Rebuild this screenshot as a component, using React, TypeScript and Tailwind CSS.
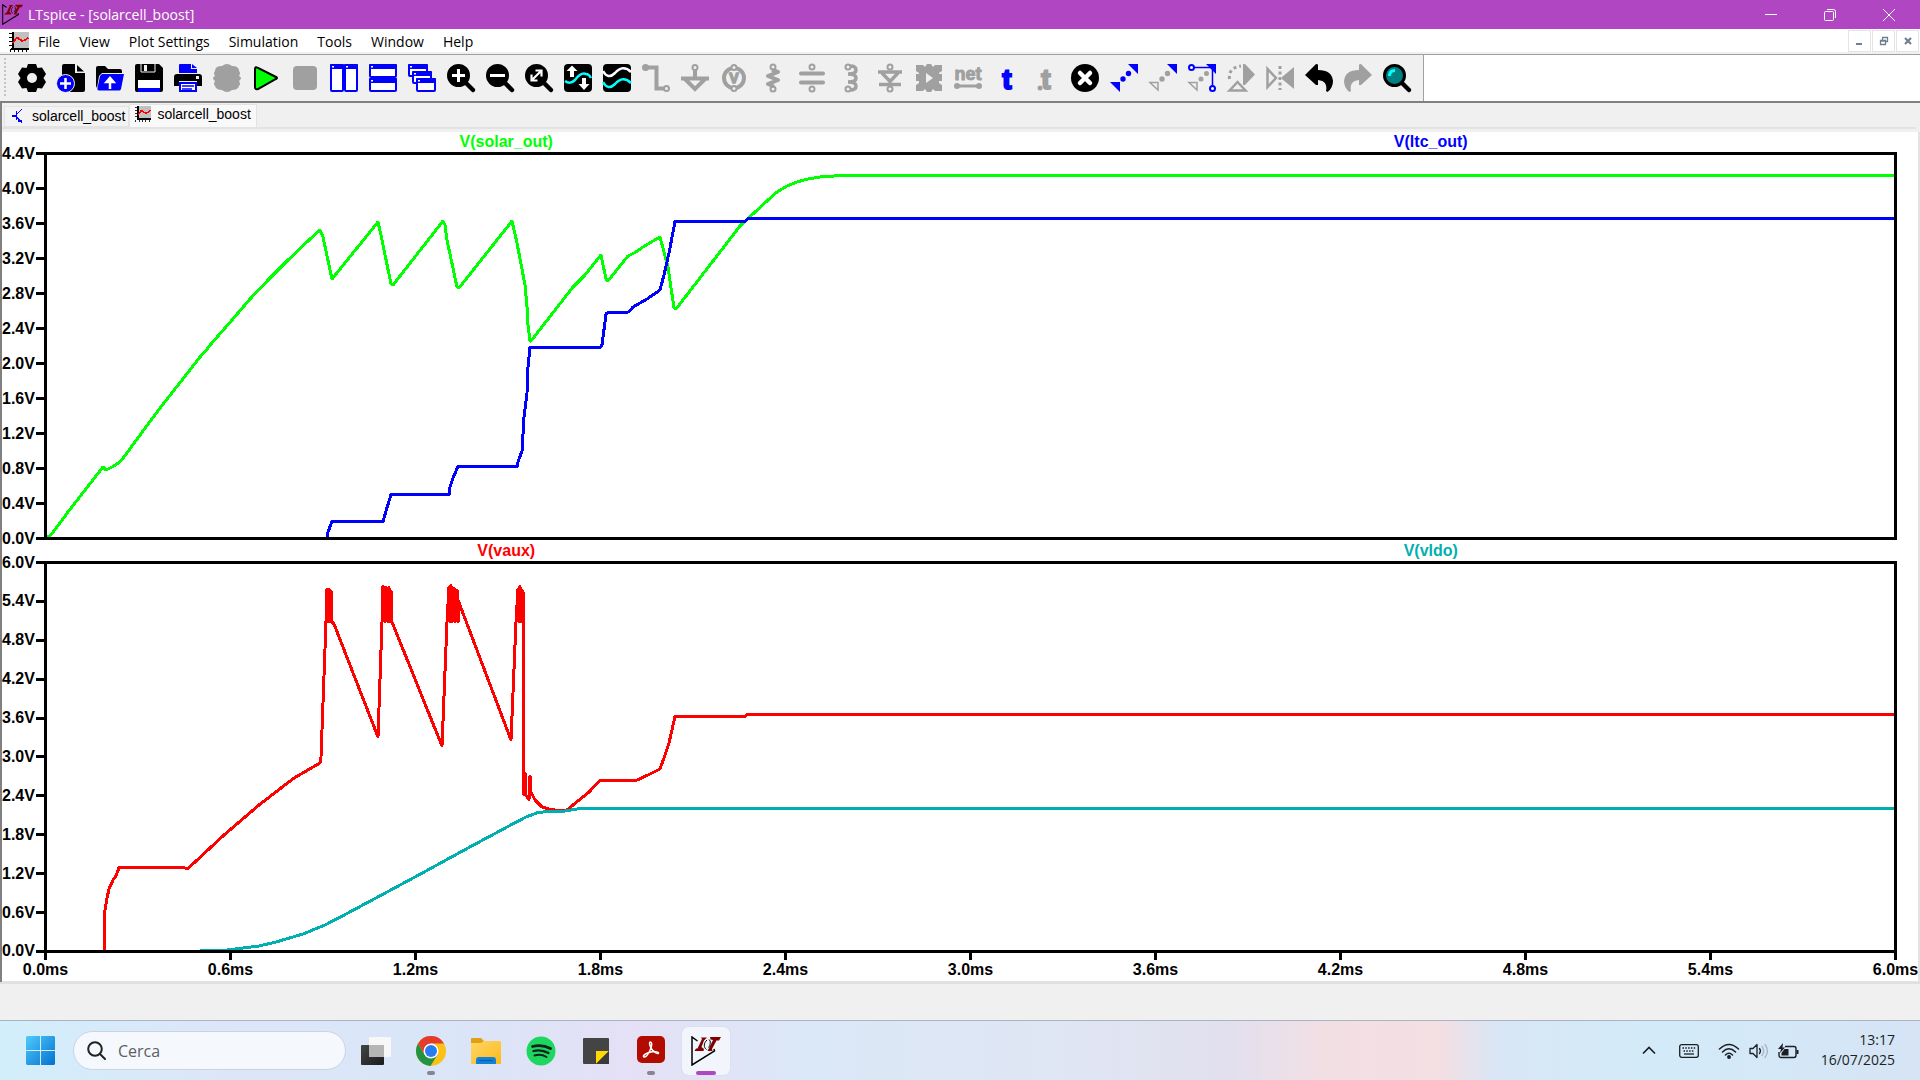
import type { ReactNode } from "react";

type Tool = { label: string; icon: ReactNode; disabled?: boolean };

const G = "#a0a0a0";
const B = "#0000ff";

function LtLogo({ size, outline = "#000000" }: { size: number; outline?: string }) {
  return (
    <svg width={size} height={size} viewBox="0 0 30 30" aria-hidden="true">
      <path d="M6.500 5 L1 1 L1 29 L23.500 15 L23 13" fill="none" stroke={outline} strokeWidth="1.500" />
      <path
        d="M10 1.500 H16 L13 4.500 L10.500 11 L13 13 L12.500 15 H3.500 L5 12.500 H6.500 L11 3 Z M19 1 H30 L28 4.500 H25.500 L21 13 L21.500 15 H16.500 L22 4 L19.500 3.500 Z"
        fill="#7f0000"
      />
      <path d="M16 4 C12.500 7 12.500 11.500 15.500 13.500 M18 3.500 C20 5 19.500 9 17.500 11.500" fill="none" stroke={outline} strokeWidth="1" />
    </svg>
  );
}

function PlotIcon({ size }: { size: number }) {
  return (
    <svg width={size} height={size} viewBox="0 0 20 20" shapeRendering="crispEdges" aria-hidden="true">
      <rect x="3" y="0" width="17" height="16" fill="#c0c0c0" />
      <path d="M3.500 0 V17 M2 16.500 H20" stroke="#000" strokeWidth="2" />
      <path d="M0 1.500 H3 M0 5.500 H3 M0 9.500 H3 M0 13.500 H3 M1 19.500 V17 M5.500 20 V17 M9.500 20 V17 M13.500 20 V17 M17.500 20 V17" stroke="#000" />
      <path d="M4 11 L7 6.500 L9 6 L13 9 L16 8 L19.500 5.500" fill="none" stroke="#f00" strokeWidth="1.800" />
    </svg>
  );
}

function Lens({ children, fill = "#000" }: { children: ReactNode; fill?: string }) {
  return (
    <>
      <path d="M18 18 L26 26" stroke="#000" strokeWidth="4.500" strokeLinecap="round" />
      <circle cx="11.500" cy="11.500" r="10" fill={fill} stroke="#000" strokeWidth="3" />
      {children}
    </>
  );
}

const MINI = (x: number, y: number, w: number, h: number) => (
  <g key={`${x}-${y}`}>
    <rect x={x + 1} y={y + 1} width={w - 2} height={h - 2} rx="1" fill="#fff" stroke={B} strokeWidth="2" />
    <rect x={x} y={y} width={w} height="5" rx="1" fill={B} />
    <rect x={x + 2} y={y + 2} width="2" height="1.500" fill="#fff" />
  </g>
);

const tools: Tool[] = [
  {
    label: "Settings",
    icon: (
      <>
        <path
          d="M10 0 H18 L19.500 4 L24 3.500 L28 10 L25.500 14 L28 18 L24 24.500 L19.500 24 L18 28 H10 L8.500 24 L4 24.500 L0 18 L2.500 14 L0 10 L4 3.500 L8.500 4 Z"
          strokeLinejoin="round"
        />
        <circle cx="14" cy="14" r="5" fill="#f0f0f0" />
      </>
    ),
  },
  {
    label: "New",
    icon: (
      <>
        <path d="M7 0 H18 V9 H28 V26 Q28 28 26 28 H7 Q5 28 5 26 V2 Q5 0 7 0 Z M20 1 L27 7.500 H20 Z" />
        <circle cx="8.500" cy="19.500" r="9" fill={B} stroke="#f0f0f0" strokeWidth="1" />
        <path d="M8.500 14 V25 M3 19.500 H14" stroke="#fff" strokeWidth="2.500" />
      </>
    ),
  },
  {
    label: "Open",
    icon: (
      <>
        <path d="M0 22 V4 Q0 2 2 2 H9 L12 5 H24 Q26 5 26 7 V9 H6 L3 12 L1 24 Z" />
        <path d="M6 10 H28 L25 25 Q24.500 26.500 23 26.500 H3 Q1 26.500 1.500 24 L4 12 Z" fill={B} />
        <path d="M14 25 V17 M10.500 18 L14 14 L17.500 18 Z" fill="#fff" stroke="#fff" strokeWidth="2.500" />
      </>
    ),
  },
  {
    label: "Save",
    icon: (
      <>
        <path d="M2 0 H24 L28 4 V26 Q28 28 26 28 H2 Q0 28 0 26 V2 Q0 0 2 0 Z" />
        <path d="M6 0 V8 H20 V0" fill="none" stroke="#f0f0f0" strokeWidth="1" />
        <rect x="9" y="1" width="3" height="6" fill="#f0f0f0" />
        <rect x="3" y="16" width="22" height="9" fill="#fff" />
        <rect x="3" y="24" width="22" height="4" fill={B} />
      </>
    ),
  },
  {
    label: "Print",
    icon: (
      <>
        <path d="M5 9 V1 Q5 0 6 0 H17 V5 H23 V9 Z M18 0 L23 4 H18 Z" fill={B} />
        <path d="M3 10 H25 Q28 10 28 13 V22 H23 V17 H5 V22 H0 V13 Q0 10 3 10 Z" />
        <rect x="22" y="12" width="3" height="3" fill="#f0f0f0" />
        <rect x="6" y="19" width="16" height="8" fill="#fff" stroke={B} strokeWidth="2" />
        <path d="M8 22 H20 M8 25 H18" stroke={B} strokeWidth="1.500" />
      </>
    ),
  },
  {
    label: "Component options",
    disabled: true,
    icon: <path d="M9 2 Q14 -2 19 2 Q26 2 26 7 Q28 9 26 12 Q30 14 26 17 Q28 20 26 22 Q25 26 19 26 Q14 30 9 26 Q3 26 2 22 Q0 20 2 17 Q-2 14 2 12 Q0 9 2 7 Q2 2 9 2 Z" fill={G} />,
  },
  {
    label: "Run",
    icon: <path d="M3 5 Q3 2 6 4 L24 13 Q26 14 24 15 L6 25 Q3 26 3 23 Z" fill="#0f0" stroke="#000" strokeWidth="2" />,
  },
  { label: "Stop", disabled: true, icon: <rect x="2" y="2" width="24" height="24" rx="4" fill={G} /> },
  { label: "Tile vertically", icon: [MINI(0, 0, 14, 28), MINI(14, 0, 14, 28)] },
  { label: "Tile horizontally", icon: [MINI(0, 0, 28, 14), MINI(0, 14, 28, 14)] },
  { label: "Cascade", icon: [MINI(0, 0, 20, 13), MINI(4, 7, 20, 13), MINI(8, 14, 20, 14)] },
  {
    label: "Zoom in",
    icon: (
      <Lens>
        <path d="M11.500 5 V18 M5 11.500 H18" stroke="#fff" strokeWidth="3" />
      </Lens>
    ),
  },
  {
    label: "Zoom out",
    icon: (
      <Lens>
        <path d="M4 11.500 H19" stroke="#fff" strokeWidth="3" />
      </Lens>
    ),
  },
  {
    label: "Zoom to fit",
    icon: (
      <Lens>
        <path d="M7 16 L16 7 M10.500 6.500 H16.500 V12.500 M6.500 10.500 V16.500 H12.500" fill="none" stroke="#fff" strokeWidth="2.200" />
      </Lens>
    ),
  },
  {
    label: "Autorange",
    icon: (
      <>
        <rect width="28" height="28" rx="4" />
        <path d="M1 17 Q6 21 11 16 Q17 8 22 10 Q25 10 27 14" fill="none" stroke="#0ff" strokeWidth="2.500" />
        <path d="M6 13 V7 H2.500 L8 1.500 L13.500 7 H10 V13 Z M18 14 V20 H14.500 L20 26 L25.500 20 H22 V14 Z" fill="#fff" />
      </>
    ),
  },
  {
    label: "Add traces",
    icon: (
      <>
        <rect width="28" height="28" rx="4" />
        <path d="M0 7 Q5 16 12 9 Q20 0 28 8" fill="none" stroke="#fff" strokeWidth="2.500" />
        <path d="M0 18 Q5 27 12 20 Q20 11 28 19" fill="none" stroke="#0ff" strokeWidth="2.500" />
      </>
    ),
  },
  {
    label: "Wire",
    disabled: true,
    icon: (
      <g fill="none" stroke={G} strokeWidth="4">
        <path d="M4 3.500 H14.500 V24.500 H22" />
        <circle cx="3.500" cy="3.500" r="1.500" fill={G} />
        <circle cx="24.500" cy="24.500" r="2.500" strokeWidth="2" />
      </g>
    ),
  },
  {
    label: "Ground",
    disabled: true,
    icon: (
      <g fill="none" stroke={G} strokeWidth="4">
        <circle cx="14" cy="3.500" r="2.500" strokeWidth="2" />
        <path d="M14 6 V14 M0 14.500 H28 M4 15 L14 25 L24 15" />
      </g>
    ),
  },
  {
    label: "Voltage source",
    disabled: true,
    icon: (
      <>
        <circle cx="14" cy="14" r="10" fill="none" stroke={G} strokeWidth="4" />
        <circle cx="14" cy="3.500" r="2.500" fill="#f0f0f0" stroke={G} strokeWidth="2" />
        <circle cx="14" cy="24.500" r="2.500" fill="#f0f0f0" stroke={G} strokeWidth="2" />
        <text x="14" y="19" textAnchor="middle" fontFamily="Liberation Sans, sans-serif" fontWeight="bold" fontSize="14" fill={G} stroke={G} strokeWidth="1.500">V</text>
      </>
    ),
  },
  {
    label: "Resistor",
    disabled: true,
    icon: (
      <g fill="none" stroke={G} strokeWidth="3" strokeLinejoin="round">
        <circle cx="14" cy="3" r="2.500" strokeWidth="2" />
        <circle cx="14" cy="25" r="2.500" strokeWidth="2" />
        <path d="M13 6 L19 8 L9 12 L19 16 L9 20 L15 22.500" strokeWidth="4" />
      </g>
    ),
  },
  {
    label: "Capacitor",
    disabled: true,
    icon: (
      <g fill="none" stroke={G} strokeWidth="4" strokeLinecap="round">
        <circle cx="14" cy="3" r="2.500" strokeWidth="2" />
        <circle cx="14" cy="25" r="2.500" strokeWidth="2" />
        <path d="M3 9.500 H25 M3 18.500 H25" />
      </g>
    ),
  },
  {
    label: "Inductor",
    disabled: true,
    icon: (
      <g fill="none" stroke={G} strokeWidth="3.500">
        <circle cx="11" cy="3" r="2.500" strokeWidth="2" />
        <circle cx="11" cy="25" r="2.500" strokeWidth="2" />
        <path d="M13 2 Q19 2 19 6 Q19 10 11 10 Q19 10 19 14 Q19 18 11 18 Q19 18 19 22 Q19 26 13 26" />
      </g>
    ),
  },
  {
    label: "Diode",
    disabled: true,
    icon: (
      <g fill="none" stroke={G} strokeWidth="3.500">
        <circle cx="14" cy="3" r="2.500" strokeWidth="2" />
        <circle cx="14" cy="25" r="2.500" strokeWidth="2" />
        <path d="M2 8 H26 M6 9 L14 17.500 L22 9 M3 20.500 H25" />
      </g>
    ),
  },
  {
    label: "Component",
    disabled: true,
    icon: (
      <>
        <path d="M1 1 H8 L10 3 L12 0 H16 L18 3 L20 1 H27 V7 L24 9 V10 H27 V17 H24 V19 L27 21 V27 H20 L18 25 L16 28 H12 L10 25 L8 27 H1 V21 L4 19 V17 H1 V10 H4 V9 L1 7 Z" fill={G} />
        <path d="M11 9 L18 14 L11 19 Z" fill="#f0f0f0" />
      </>
    ),
  },
  {
    label: "Net name",
    disabled: true,
    icon: (
      <>
        <text x="14" y="16" textAnchor="middle" fontFamily="Liberation Sans, sans-serif" fontWeight="bold" fontSize="18" fill={G} stroke={G}>net</text>
        <path d="M3 22 H25" stroke={G} strokeWidth="3" />
        <circle cx="3" cy="22" r="3" fill={G} />
        <circle cx="25" cy="22" r="3" fill={G} />
      </>
    ),
  },
  {
    label: "Text",
    icon: (
      <text x="14" y="25" textAnchor="middle" fontFamily="Liberation Sans, sans-serif" fontWeight="bold" fontSize="28" fill={B} stroke={B} strokeWidth="2">t</text>
    ),
  },
  {
    label: "SPICE directive",
    disabled: true,
    icon: (
      <>
        <text x="14" y="25" textAnchor="middle" fontFamily="Liberation Sans, sans-serif" fontWeight="bold" fontSize="28" fill={G} stroke={G} strokeWidth="2">t</text>
        <circle cx="8" cy="24" r="2.500" fill={G} />
      </>
    ),
  },
  {
    label: "Delete",
    icon: (
      <>
        <circle cx="14" cy="14" r="14" />
        <path d="M9 9 L19 19 M19 9 L9 19" stroke="#fff" strokeWidth="4.500" strokeLinecap="round" />
      </>
    ),
  },
  {
    label: "Move",
    icon: (
      <g fill={B}>
        <path d="M18 0 H28 V10 Z M0 18 H10 V28 Z" />
        <circle cx="13" cy="15" r="2.700" />
        <circle cx="18.500" cy="9.500" r="2.700" />
      </g>
    ),
  },
  {
    label: "Copy",
    disabled: true,
    icon: (
      <>
        <path d="M18 0 H28 V10 Z" fill={B} />
        <path d="M1 18.500 H9 V26 Z" fill="none" stroke={G} strokeWidth="1.500" />
        <circle cx="13" cy="15" r="2.700" fill={G} />
        <circle cx="18.500" cy="9.500" r="2.700" fill={G} />
      </>
    ),
  },
  {
    label: "Drag",
    icon: (
      <>
        <path d="M18 0 H28 V10 Z" fill={B} />
        <path d="M4 3.500 H25" stroke={B} strokeWidth="1.500" />
        <path d="M24.500 4 V23" stroke={B} strokeWidth="1.500" />
        <circle cx="3.500" cy="3.500" r="2.500" fill="#fff" stroke={B} strokeWidth="2" />
        <circle cx="24.500" cy="24.500" r="2.500" fill="#fff" stroke={B} strokeWidth="2" />
        <path d="M1 18.500 H9 V26 Z" fill="none" stroke={G} strokeWidth="1.500" />
        <circle cx="13" cy="15" r="2.500" fill={G} />
        <circle cx="18.500" cy="9.500" r="2.500" fill={G} />
      </>
    ),
  },
  {
    label: "Rotate",
    disabled: true,
    icon: (
      <>
        <path d="M16 0 H18 L28 10.500 L18 21 H16 Z" fill={G} />
        <path d="M2.500 26.500 L10.500 18 L18.500 26.500 Z" fill="none" stroke={G} strokeWidth="2.500" />
        <path d="M2.500 15 Q1 4 14 2" fill="none" stroke={G} strokeWidth="3" strokeDasharray="3 3" />
      </>
    ),
  },
  {
    label: "Mirror",
    disabled: true,
    icon: (
      <>
        <path d="M28 3 V25 L16 15 V13 Z" fill={G} />
        <path d="M1.500 5 V23 L10 14 Z" fill="none" stroke={G} strokeWidth="2.500" />
        <path d="M14 2 V26" stroke={G} strokeWidth="3" strokeDasharray="3 2.500" />
      </>
    ),
  },
  { label: "Undo", icon: <path d="M0 11 L11 0 L13 0.500 V6 Q27 6 28 17 Q28 24 22.500 28 L21 27 Q23 17 13 16 V21 L11 21 Z" /> },
  {
    label: "Redo",
    disabled: true,
    icon: <path d="M28 11 L17 0 L15 0.500 V6 Q1 6 0 17 Q0 24 5.500 28 L7 27 Q5 17 15 16 V21 L17 21 Z" fill={G} />,
  },
  {
    label: "Find",
    icon: (
      <Lens fill="#008080">
        <path d="M6.500 12 Q6.500 6.500 12 6.500" fill="none" stroke="#0ff" strokeWidth="3" />
      </Lens>
    ),
  },
];

type Trace = { name: string; text: string; stroke: string; points: string };

const solar: Trace = {
  name: "V(solar_out)",
  text: "text-[#00ff00]",
  stroke: "#00ff00",
  points:
    "47,537 51,535 57,527 68,512 103,467 106,470 114,466 121,461 143,431 164,403 186,375 200,357 208,348 211,344 232,320 250,299 270,278 273,275 286,262 309,240 320,230 323,237 332,279 378,222 381,235 391,284 393,285 443,221 445,225 447,240 457,287 459,288 512,221 517,243 525,285 527,307 528,325 530,341 531,341 573,287 585,275 601,255 606,279 608,281 628,256 636,252 643,247 653,241 660,237 668,267 674,308 676,309 740,226 768,200 777,192 787,186 797,182 808,179 820,177 834,176 845,175.500 1896,175.500",
};
const ltc: Trace = {
  name: "V(ltc_out)",
  text: "text-[#0000ff]",
  stroke: "#0000ff",
  points:
    "327,538 328,532 332,521.500 383,521.500 386,511 391,494.500 449,494.500 450,487 453,478 458,466.500 517,466.500 518,462 522,451 524,417 527,393 528,367 530,347.500 600,347.500 602,345 606,314 608,312.500 627,312.500 630,311 633,307 647,299 660,290 664,275 669,253 675,221.500 745,221.500 748,218.500 1896,218.500",
};
const vaux: Trace = {
  name: "V(vaux)",
  text: "text-[#ff0000]",
  stroke: "#ff0000",
  points:
    "104,951 105,910 107,898 109,889 113,880 116,876 119,867.500 182,867.500 188,868.500 210,848 224,835 259,805 294,778 320,763 321,757 323,703 326,622 327,589 328,622 329,589 330,622 331,591 332,622 334,624 378,737 382,622 383,586 385,622 386,587 388,622 389,587 390,622 391,591 392,622 442,746 447,622 449,587 450,622 451,585 452,622 454,588 455,622 457,590 458,622 458,600 511,740 516,622 518,589 519,622 520,586 521,622 522,590 523,592 524,795 525,773 526,795 529,800 530,776 531,792 535,800 542,807 549,809 555,810 567,810 573,805 589,792 600,780.500 636,780.500 648,775 656,771 660,769 664,758 669,743 675,716.500 745,716.500 747,714.500 1896,714.500",
};
const vldo: Trace = {
  name: "V(vldo)",
  text: "text-[#00b0b0]",
  stroke: "#00b0b0",
  points:
    "200,950.500 227,950 243,948 259,946 276,942 303,934 325,925 348,913 415,877 468,848 509,826 526,817 538,812.500 549,811.500 562,811.500 580,808.500 1896,808.500",
};

function Pane({ traces, ticks, viewBox, grow, header }: { traces: Trace[]; ticks: string[]; viewBox: string; grow: string; header: string }) {
  return (
    <section className={`flex min-h-0 flex-col ${grow}`}>
      <div className={`ml-[42px] mr-[27px] grid shrink-0 grid-cols-2 text-center ${header}`}>
        {traces.map((t) => (
          <span key={t.name} className={t.text}>{t.name}</span>
        ))}
      </div>
      <div className="mr-[23px] flex min-h-0 flex-1">
        <div className="flex w-[42px] shrink-0 flex-col justify-between">
          {ticks.map((t) => (
            <div key={t} className="flex h-[3px] items-center justify-between">
              <span className="leading-4">{t}</span>
              <span className="h-[3px] w-2 bg-black" />
            </div>
          ))}
        </div>
        <div className="min-w-0 flex-1 border-[3px] border-black">
          <svg className="block h-full w-full" viewBox={viewBox} preserveAspectRatio="none" role="img" aria-label={traces.map((t) => t.name).join(", ")}>
            {traces.map((t) => (
              <polyline key={t.name} points={t.points} fill="none" stroke={t.stroke} strokeWidth="3" vectorEffect="non-scaling-stroke" shapeRendering="crispEdges" strokeLinejoin="round" />
            ))}
          </svg>
        </div>
      </div>
    </section>
  );
}

const upperTicks = ["4.4V", "4.0V", "3.6V", "3.2V", "2.8V", "2.4V", "2.0V", "1.6V", "1.2V", "0.8V", "0.4V", "0.0V"];
const lowerTicks = ["6.0V", "5.4V", "4.8V", "4.2V", "3.6V", "3.0V", "2.4V", "1.8V", "1.2V", "0.6V", "0.0V"];
const timeTicks = ["0.0ms", "0.6ms", "1.2ms", "1.8ms", "2.4ms", "3.0ms", "3.6ms", "4.2ms", "4.8ms", "5.4ms", "6.0ms"];
const menus = ["File", "View", "Plot Settings", "Simulation", "Tools", "Window", "Help"];

const apps: { label: string; mark?: string; active?: boolean; icon: ReactNode }[] = [
  {
    label: "Task view",
    icon: (
      <svg width="30" height="30" viewBox="0 0 30 30">
        <defs>
          <linearGradient id="tv" x1="0" y1="0" x2="1" y2="1">
            <stop offset="0" stopColor="#444" />
            <stop offset="1" stopColor="#1c1c1c" />
          </linearGradient>
        </defs>
        <rect x="0" y="9" width="23" height="20" rx="1" fill="url(#tv)" />
        <rect x="8" y="1" width="22" height="20" rx="1" fill="#f7f7f7" />
        <rect x="8" y="9" width="15" height="12" fill="#b5b5b5" />
      </svg>
    ),
  },
  {
    label: "Google Chrome",
    mark: "w-2 bg-[#85858f]",
    icon: (
      <svg width="30" height="30" viewBox="0 0 30 30">
        <circle cx="15" cy="15" r="15" fill="#fbc116" />
        <path d="M15 15 L8.500 18.750 L2 7.500 A15 15 0 0 0 14.500 30 L21.500 18.750 Z" fill="#229342" />
        <path d="M2 7.500 A15 15 0 0 1 28 7.500 L15 7.500 L15 15 L8.500 18.750 Z" fill="#e33b2e" />
        <circle cx="15" cy="15" r="7.500" fill="#fff" />
        <circle cx="15" cy="15" r="6" fill="#2a7af0" />
      </svg>
    ),
  },
  {
    label: "File Explorer",
    icon: (
      <svg width="30" height="30" viewBox="0 0 30 30">
        <defs>
          <linearGradient id="fe" x1="0" y1="0" x2="1" y2="1">
            <stop offset="0" stopColor="#ffd766" />
            <stop offset="1" stopColor="#fbb91c" />
          </linearGradient>
        </defs>
        <path d="M0 3 Q0 2 1 2 H10 L13 5 V8 H0 Z" fill="#dfa012" />
        <path d="M0 7 H10 L13 5 H29 Q30 5 30 6 V27 Q30 28 29 28 H1 Q0 28 0 27 Z" fill="url(#fe)" />
        <path d="M5 28 V24 Q5 21 8 21 H22 Q25 21 25 24 V28 Z" fill="#1382d4" />
        <path d="M8 24.500 H22" stroke="#0b5ea8" strokeWidth="1.200" />
      </svg>
    ),
  },
  {
    label: "Spotify",
    icon: (
      <svg width="30" height="30" viewBox="0 0 30 30" fill="none" stroke="#10231a" strokeLinecap="round">
        <circle cx="15" cy="15" r="14.500" fill="#1ed760" stroke="none" />
        <path d="M6.500 10.500 Q16 8 24.500 12.500" strokeWidth="2.700" />
        <path d="M7.500 15 Q15.500 13 22.500 17" strokeWidth="2.300" />
        <path d="M8.500 19.500 Q15 17.500 20.500 21" strokeWidth="1.900" />
      </svg>
    ),
  },
  {
    label: "Sticky Notes",
    icon: (
      <svg width="30" height="30" viewBox="0 0 30 30">
        <rect x="2" y="2" width="26" height="26" rx="1" fill="#444" />
        <path d="M15 15 H28 L15 28 Z" fill="#ffd800" />
        <path d="M28 15 V28 H15 Z" fill="#3a3a3a" />
      </svg>
    ),
  },
  {
    label: "Adobe Acrobat",
    mark: "w-2 bg-[#85858f]",
    icon: (
      <svg width="30" height="30" viewBox="0 0 30 30">
        <rect x="1" y="0" width="28" height="27" rx="5" fill="#b30b00" />
        <path
          d="M14.500 6 C13 6 13.500 9 15 12 C17 15.500 20.500 18 22 17.500 C24 16.500 20 14.500 13 16.500 C8 18 6.500 20.500 8 21 C10 21.500 13 17 15 12 C16 9 16 6 14.500 6 Z"
          fill="none"
          stroke="#fff"
          strokeWidth="1.500"
        />
      </svg>
    ),
  },
  { label: "LTspice", mark: "w-5 bg-[#b146c2]", active: true, icon: <LtLogo size={30} /> },
];

export default function App() {
  return (
    <div className="flex h-screen min-h-[600px] flex-col overflow-hidden bg-white font-['Open_Sans','Noto_Sans',sans-serif] text-black">
      <header className="flex h-[29px] shrink-0 items-center bg-[#b146c2] pl-0.5 text-white">
        <LtLogo size={21} />
        <h1 className="ml-[5px] flex-1 text-sm leading-5">LTspice - [solarcell_boost]</h1>
        <div className="flex h-full pr-0.5">
          <button aria-label="Minimize" className="flex w-[59px] items-center justify-center">
            <svg width="12" height="12" viewBox="0 0 12 12" stroke="#fff"><path d="M0 5.500 H12" /></svg>
          </button>
          <button aria-label="Restore" className="flex w-[59px] items-center justify-center">
            <svg width="12" height="12" viewBox="0 0 12 12" fill="none" stroke="#fff">
              <rect x="0.500" y="2.500" width="9" height="9" rx="1" />
              <path d="M3 0.500 H9.500 Q11.500 0.500 11.500 2.500 V9" />
            </svg>
          </button>
          <button aria-label="Close" className="flex w-[59px] items-center justify-center">
            <svg width="12" height="12" viewBox="0 0 12 12" stroke="#fff"><path d="M0 0 L12 12 M12 0 L0 12" /></svg>
          </button>
        </div>
      </header>

      <div className="flex h-[26px] shrink-0 items-center justify-between border-b border-[#a0a0a0] bg-white pl-[9px] pr-px shadow-[inset_0_-2px_0_#f0f0f0]">
        <div className="flex items-center">
          <PlotIcon size={20} />
          <nav aria-label="Main menu" className="flex gap-px">
            {menus.map((m) => (
              <button key={m} className="px-[9px] text-sm leading-5">{m}</button>
            ))}
          </nav>
        </div>
        <div className="flex gap-px pb-0.5 text-[#708090]">
          <button aria-label="Minimize document" className="flex h-[22px] w-[23px] items-center justify-center border border-[#e4e4e4]">
            <svg width="10" height="10" viewBox="0 0 10 10" fill="currentColor"><rect x="1" y="7" width="6" height="2" /></svg>
          </button>
          <button aria-label="Restore document" className="flex h-[22px] w-[23px] items-center justify-center border border-[#e4e4e4]">
            <svg width="10" height="10" viewBox="0 0 10 10" fill="none" stroke="currentColor"><path d="M1.500 4.500 H6.500 V8.500 H1.500 Z M3.500 4 V2 M3 1.500 H8.500 V5.500 H7 M1.500 5 H6.500" strokeWidth="1.300" /></svg>
          </button>
          <button aria-label="Close document" className="flex h-[22px] w-[23px] items-center justify-center border border-[#e4e4e4]">
            <svg width="10" height="10" viewBox="0 0 10 10" stroke="currentColor"><path d="M2 2 L8 8 M8 2 L2 8" strokeWidth="2.200" /></svg>
          </button>
        </div>
      </div>

      <div className="flex h-[46px] shrink-0 bg-white">
        <div role="toolbar" aria-label="Tools" className="flex items-center border-r border-[#a0a0a0] bg-[#f0f0f0] pr-[7px]">
          <span className="ml-1 mr-1.5 h-10 w-[2px] bg-[repeating-linear-gradient(#c4c4c4_0_2px,#f0f0f0_2px_4px)]" />
          {tools.map((t) => (
            <button key={t.label} aria-label={t.label} disabled={t.disabled} className="flex h-full w-[39px] items-center justify-center">
              <svg className="overflow-visible" width="28" height="28" viewBox="0 0 28 28" aria-hidden="true">{t.icon}</svg>
            </button>
          ))}
        </div>
      </div>

      <main className="flex min-h-0 flex-1 flex-col border-l-2 border-t-2 border-[#808080] font-['Liberation_Sans',Arial,sans-serif]">
        <div className="h-[29px] shrink-0 bg-[#f0f0f0]">
          <div role="tablist" className="mr-1 flex h-[26px] items-start border-b-2 border-[#e3e3e3] pl-0.5 text-sm leading-4">
            <button role="tab" aria-selected="false" className="mt-[3px] flex h-[21px] items-center border border-[#e3e3e3] bg-[#f3f3f3] pb-0.5 pl-[5px] pr-[3px]">
              <svg width="16" height="16" viewBox="0 0 16 16" fill="none" stroke={B} strokeWidth="1.300" shapeRendering="crispEdges" aria-hidden="true">
                <path d="M2 8 H6 M6.500 3 V12 M7 6 L12 1 M7 9 L12 15 M8 13 H12" />
              </svg>
              <span className="ml-1.5">solarcell_boost</span>
            </button>
            <button role="tab" aria-selected="true" className="mt-px flex h-[23px] items-center border border-b-0 border-[#e3e3e3] bg-[#f9f9f9] px-[5px] pb-1">
              <PlotIcon size={16} />
              <span className="ml-1.5">solarcell_boost</span>
            </button>
          </div>
        </div>
        <div className="flex min-h-0 flex-1 flex-col border-b border-r-2 border-[#e3e3e3] bg-white">
          <div className="-mr-0.5 flex min-h-0 flex-1 flex-col whitespace-nowrap text-base font-bold">
            <Pane traces={[solar, ltc]} ticks={upperTicks} viewBox="47 155 1847 382" grow="flex-[408]" header="h-5 leading-[19px]" />
            <Pane traces={[vaux, vldo]} ticks={lowerTicks} viewBox="47 564 1847 386" grow="flex-[413]" header="h-[21px] leading-[21px]" />
            <div className="ml-[42px] mr-[23px] flex h-7 shrink-0 justify-between">
              {timeTicks.map((t) => (
                <div key={t} className="flex w-[3px] flex-col items-center">
                  <span className="h-[7px] w-[3px] bg-black" />
                  <span className="mt-0.5 leading-4">{t}</span>
                </div>
              ))}
            </div>
          </div>
        </div>
      </main>
      <div className="h-[38px] shrink-0 border-t-2 border-[#e0e0e0] bg-[#f0f0f0]" />

      <footer className="flex h-[60px] shrink-0 items-center justify-between border-t border-[#a9b4c2] bg-[linear-gradient(90deg,#d2eefb_0%,#dde6f8_12%,#d9e6f8_22%,#e5e0f5_33%,#dbe8f7_42%,#dfe6f4_55%,#e2e0ee_64%,#f2dfe4_69%,#f4dfe3_75%,#d8e6f5_78%,#d3ebf8_86%,#d6e4f6_100%)] pl-[17px] pr-[25px]">
        <div className="flex items-center">
          <button aria-label="Start" className="flex h-12 w-[47px] items-center justify-center">
            <svg width="29" height="29" viewBox="0 0 29 29" aria-hidden="true">
              <defs>
                <linearGradient id="win" x1="0" y1="0" x2="1" y2="1">
                  <stop offset="0" stopColor="#4fcbfb" />
                  <stop offset="1" stopColor="#0470cf" />
                </linearGradient>
              </defs>
              <path d="M1 0 H14 V14 H0 V1 Z M15 0 H28 L29 1 V14 H15 Z M0 15 H14 V29 H1 L0 28 Z M15 15 H29 V28 L28 29 H15 Z" fill="url(#win)" />
            </svg>
          </button>
          <label className="ml-[9px] mr-1.5 flex h-[39px] w-[273px] items-center rounded-full border border-[#c9d3e2] bg-[#f5f8fd] pl-[13px]">
            <svg width="19" height="19" viewBox="0 0 19 19" fill="none" stroke="#222" strokeWidth="2" aria-hidden="true">
              <circle cx="8" cy="8" r="6.800" />
              <path d="M13 13 L18 18" strokeLinecap="round" />
            </svg>
            <input type="text" aria-label="Cerca" placeholder="Cerca" className="ml-3 w-[190px] bg-transparent text-base leading-6 outline-none placeholder:text-[#5d5f63]" />
          </label>
          <div className="flex gap-[7px]">
            {apps.map((a) => (
              <button key={a.label} aria-label={a.label} className={`relative flex h-12 w-12 items-center justify-center rounded-md ${a.active ? "bg-[#f3f5fd] shadow-[0_0_1px_#b8bfd0]" : ""}`}>
                {a.icon}
                {a.mark && <span className={`absolute bottom-0 left-1/2 h-1 -translate-x-1/2 rounded-full ${a.mark}`} />}
              </button>
            ))}
          </div>
        </div>

        <div className="flex items-center text-[#1c1f24]">
          <button aria-label="Show hidden icons" className="flex w-10 justify-center">
            <svg width="14" height="9" viewBox="0 0 14 9" fill="none" stroke="currentColor" strokeWidth="1.700"><path d="M1 7.500 L7 1.500 L13 7.500" /></svg>
          </button>
          <button aria-label="Touch keyboard" className="flex w-10 justify-center">
            <svg width="20" height="14" viewBox="0 0 20 14" fill="none" stroke="currentColor" strokeWidth="1.300">
              <rect x="0.700" y="0.700" width="18.600" height="12.600" rx="2" />
              <path d="M3.500 4 H16.500" strokeDasharray="1.500 1.300" strokeWidth="1.600" />
              <path d="M4.500 7 H15.500" strokeDasharray="1.500 1.300" strokeWidth="1.600" />
              <path d="M5 10 H15" />
            </svg>
          </button>
          <button aria-label="Network, volume and battery" className="ml-[9px] mr-[22px] flex items-center gap-[9px]">
            <svg width="22" height="16" viewBox="0 0 22 16" fill="none" stroke="currentColor" strokeWidth="1.500" strokeLinecap="round">
              <path d="M1.500 6 Q11 -3 20.500 6 M4.500 9 Q11 2.500 17.500 9 M7.500 12 Q11 8.500 14.500 12" />
              <circle cx="11" cy="14" r="1.200" fill="currentColor" />
            </svg>
            <svg width="20" height="16" viewBox="0 0 20 16" fill="none" stroke="currentColor" strokeWidth="1.300" strokeLinejoin="round" strokeLinecap="round">
              <path d="M1 5.500 H4 L8 1.500 V14.500 L4 10.500 H1 Z M10.500 5.500 Q12.500 8 10.500 10.500" />
              <path d="M13 3.500 Q16.500 8 13 12.500 M16 1.500 Q21 8 16 14.500" stroke="#a9b4c2" />
            </svg>
            <svg width="21" height="16" viewBox="0 0 21 16" fill="none" stroke="currentColor" strokeWidth="1.400">
              <path d="M7 3.500 H16 Q18 3.500 18 5.500 V12 Q18 14.500 16 14.500 H3 Q1 14.500 1 12 V9" />
              <path d="M19.500 7 V11" strokeWidth="2" />
              <path d="M3.500 12.500 V10 L6.500 6 H10.500 V12.500 Z M5 0 L0 6 H3 L2 10 L7 4.500 H4.500 Z" fill="currentColor" stroke="none" />
            </svg>
          </button>
          <button className="pb-0.5 text-right text-sm leading-5">
            <time className="block">13:17</time>
            <time className="block">16/07/2025</time>
          </button>
        </div>
      </footer>
    </div>
  );
}
